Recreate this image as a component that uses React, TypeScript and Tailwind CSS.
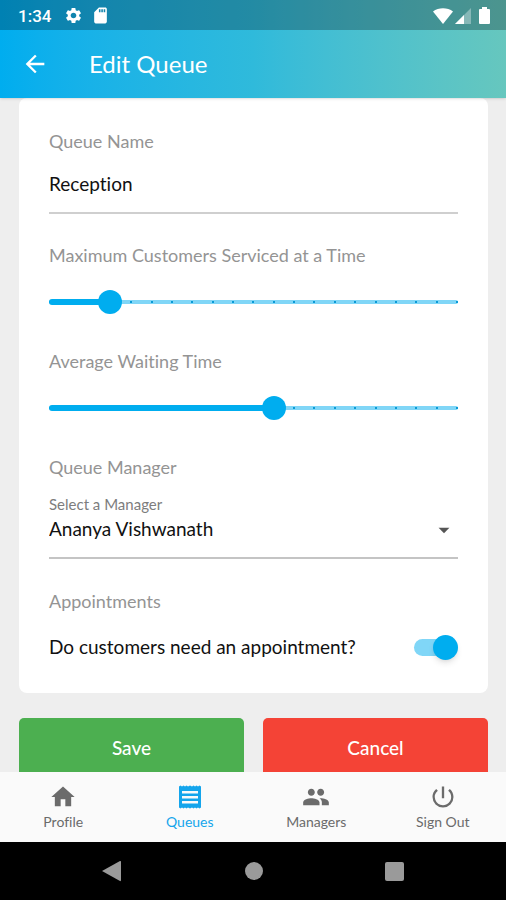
import React, { useState } from "react";
import {
  MdArrowBack,
  MdArrowDropDown,
  MdHome,
  MdPeople,
  MdPowerSettingsNew,
  MdSdCard,
  MdSettings,
} from "react-icons/md";

const STEPS = 20;

function StepSlider({
  id,
  label,
  initial,
}: {
  id: string;
  label: string;
  initial: number;
}) {
  const [value, setValue] = useState(initial);

  return (
    <div>
      <label htmlFor={id} className="block text-[18px] leading-6 text-[#949494]">
        {label}
      </label>
      <div className="relative mt-5 h-[30px] flex items-center">
        <div className="w-full h-1 rounded-full bg-[#80d6f7] flex items-center justify-between">
          {Array.from({ length: STEPS + 1 }).map((_, i) => (
            <span key={i} className="size-[2px] bg-[#0a9ad6]" />
          ))}
        </div>
        <div
          className="absolute left-0 h-[6px] rounded-full bg-[#00adef]"
          style={{ width: `${(value / STEPS) * 100}%` }}
        />
        <input
          id={id}
          type="range"
          min={0}
          max={STEPS}
          value={value}
          onChange={(e) => setValue(Number(e.target.value))}
          className="absolute -inset-x-3 h-[30px] appearance-none bg-transparent [&::-webkit-slider-thumb]:appearance-none [&::-webkit-slider-thumb]:size-6 [&::-webkit-slider-thumb]:rounded-full [&::-webkit-slider-thumb]:bg-[#00adef]"
        />
      </div>
    </div>
  );
}

function StatusBar() {
  return (
    <div className="h-[30px] bg-black/25 px-4 pt-px flex items-center justify-between text-white">
      <div className="flex items-center pl-[2px]">
        <span className="font-['Roboto'] font-medium text-[17px] leading-5">
          1:34
        </span>
        <MdSettings className="ml-[13px] size-[19px]" />
        <MdSdCard className="ml-2 size-[19px]" />
      </div>
      <div className="flex items-center">
        <svg viewBox="0 0 20 16" className="w-5 h-4" fill="currentColor">
          <path d="M10 16 0 3.5C5.5-.8 14.500-.8 20 3.5Z" />
        </svg>
        <svg viewBox="0 0 16 16" className="ml-[2px] size-4" fill="currentColor">
          <path d="M0 16 16 0V16Z" opacity=".35" />
          <path d="M0 16 9 7V16Z" />
        </svg>
        <svg viewBox="0 0 11 17" className="ml-2 w-[11px] h-[17px]" fill="currentColor">
          <path d="M3 0H8V2H10Q11 2 11 3V16Q11 17 10 17H1Q0 17 0 16V3Q0 2 1 2H3Z" />
        </svg>
      </div>
    </div>
  );
}

function QueuesIcon() {
  return (
    <svg viewBox="0 0 28 28" className="size-7" fill="currentColor">
      <path
        fillRule="evenodd"
        d="M3 3.500 4.500 2.500 6 3.500 7.500 2.500 9 3.500 10.500 2.500 12 3.500 14 2.500 16 3.500 17.500 2.500 19 3.500 20.500 2.500 22 3.500 23.500 2.500 25 3.500V24.500L23.500 25.500 22 24.500 20.500 25.500 19 24.500 17.500 25.500 16 24.500 14 25.500 12 24.500 10.500 25.500 9 24.500 7.500 25.500 6 24.500 4.500 25.500 3 24.500ZM6 8V10.500H22V8ZM6 13V15.500H22V13ZM6 18V20.500H22V18Z"
      />
    </svg>
  );
}

function EditForm() {
  const [name, setName] = useState("Reception");

  return (
    <div className="bg-white rounded-lg px-[30px] pt-[31px] pb-[30px]">
      <label
        htmlFor="queue-name"
        className="block text-[18px] leading-6 text-[#949494]"
      >
        Queue Name
      </label>
      <input
        id="queue-name"
        type="text"
        value={name}
        onChange={(e) => setName(e.target.value)}
        className="mt-3 block w-full h-[49px] pb-[10px] border-b-2 border-[#cfcfcf] text-[19px] text-[#111] outline-none"
      />
      <div className="mt-[29px] space-y-8">
        <StepSlider
          id="max-customers"
          label="Maximum Customers Serviced at a Time"
          initial={3}
        />
        <StepSlider id="waiting-time" label="Average Waiting Time" initial={11} />
        <div>
          <h2 className="text-[18px] leading-6 text-[#949494]">Queue Manager</h2>
          <label
            htmlFor="manager"
            className="mt-4 block text-[15px] leading-[18px] text-[#7d7d7d]"
          >
            Select a Manager
          </label>
          <div className="relative">
            <select
              id="manager"
              className="block w-full h-[46px] pb-3 appearance-none border-b-2 border-[#c4c4c4] bg-transparent text-[19px] text-[#111] outline-none"
            >
              <option>Ananya Vishwanath</option>
            </select>
            <MdArrowDropDown className="absolute right-px top-1 size-[26px] text-[#555] pointer-events-none" />
          </div>
        </div>
      </div>
      <h2 className="mt-[30px] text-[18px] leading-6 text-[#949494]">
        Appointments
      </h2>
      <label className="mt-[18px] h-8 flex items-center justify-between text-[19px] text-[#111]">
        Do customers need an appointment?
        <span className="relative w-11 h-[26px] flex items-center">
          <input type="checkbox" defaultChecked className="peer sr-only" />
          <span className="w-9 h-[17px] rounded-full bg-[#bdbdbd] peer-checked:bg-[#80d6f7]" />
          <span className="absolute left-0 size-[25px] rounded-full bg-white shadow-md peer-checked:left-[19px] peer-checked:bg-[#00adef]" />
        </span>
      </label>
    </div>
  );
}

function App() {
  return (
    <div className="h-screen flex flex-col bg-[#eeeeee] font-['Lato',sans-serif] [font-variant-ligatures:none]">
      <header className="bg-linear-to-r from-[#00adef] via-[#2fbadb] to-[#66c7be] shadow-sm text-white z-10">
        <StatusBar />
        <div className="h-[68px] px-[21px] flex items-center">
          <button type="button" aria-label="Back">
            <MdArrowBack className="size-7" />
          </button>
          <h1 className="ml-10 text-2xl">Edit Queue</h1>
        </div>
      </header>

      <main className="flex-1 min-h-0 overflow-hidden pl-[19px] pr-[18px]">
        <EditForm />
        <div className="mt-[25px] grid grid-cols-2 gap-[19px] text-white text-[19px] font-medium">
          <button type="button" className="h-[60px] rounded-[5px] bg-[#4caf50]">
            Save
          </button>
          <button type="button" className="h-[60px] rounded-[5px] bg-[#f44336]">
            Cancel
          </button>
        </div>
      </main>

      <nav className="h-[70px] bg-[#fafafa] grid grid-cols-4 text-[14px] leading-5 text-[#6b6b6b]">
        <a href="#profile" className="pt-[11px] flex flex-col items-center gap-px">
          <MdHome className="size-7" />
          Profile
        </a>
        <a
          href="#queues"
          className="pt-[11px] flex flex-col items-center gap-px text-[#14a5ec]"
        >
          <QueuesIcon />
          Queues
        </a>
        <a href="#managers" className="pt-[11px] flex flex-col items-center gap-px">
          <MdPeople className="size-7" />
          Managers
        </a>
        <a href="#sign-out" className="pt-[11px] flex flex-col items-center gap-px">
          <MdPowerSettingsNew className="size-7" />
          Sign Out
        </a>
      </nav>

      <div className="h-[58px] bg-black px-[102px] flex items-center justify-between text-[#9a9a9a]">
        <button type="button" aria-label="System back">
          <svg viewBox="0 0 20 22" className="w-5 h-[22px]" fill="currentColor">
            <path d="M0 11 18 1Q19 .5 19 2V20Q19 21.500 18 21Z" />
          </svg>
        </button>
        <button
          type="button"
          aria-label="Home"
          className="size-[18px] rounded-full bg-[#9a9a9a]"
        />
        <button
          type="button"
          aria-label="Recent apps"
          className="size-[19px] rounded-[2px] bg-[#9a9a9a]"
        />
      </div>
    </div>
  );
}

export default App;
